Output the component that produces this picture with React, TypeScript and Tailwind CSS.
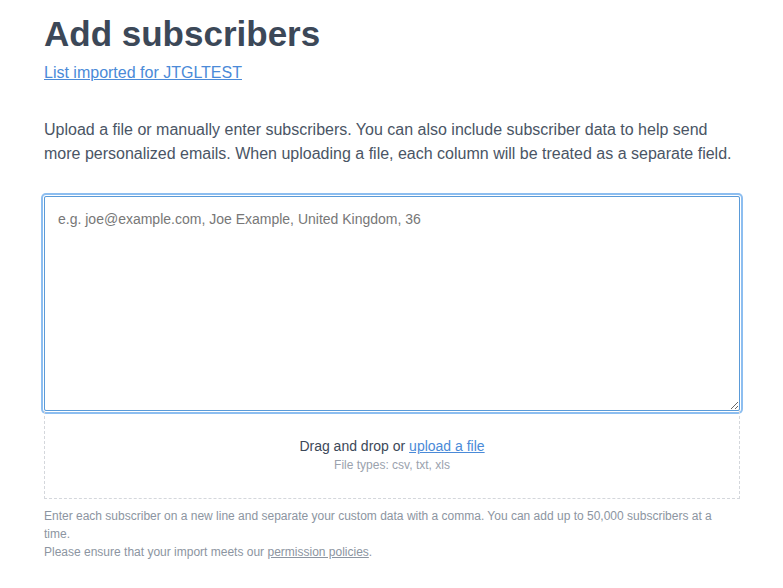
import React from "react";

export default function App() {
  return (
    <div className="min-h-[588px] bg-white" style={{ fontFamily: '"Liberation Sans", Arial, sans-serif' }}>
      <div className="w-[696px] ml-[44px] pt-[14px]">
        <h1 className="text-[35px] leading-[40px] font-bold text-[#3c4858]">Add subscribers</h1>
        <a href="#" className="block mt-[9px] text-[16px] leading-[20px] text-[#4a8ad8] underline">
          List imported for JTGLTEST
        </a>
        <p className="mt-[35px] text-[16px] leading-[24px] text-[#4a5565]">
          Upload a file or manually enter subscribers. You can also include subscriber data to help send more personalized emails. When uploading a file, each column will be treated as a separate field.
        </p>
        <div className="mt-[30px]">
          <textarea
            autoFocus
            placeholder="e.g. joe@example.com, Joe Example, United Kingdom, 36"
            className="block w-full h-[215px] border border-[#5b9bd8] rounded-[2px] px-[13px] pt-[12px] text-[14px] leading-[20px] text-[#333] placeholder:text-[#777] outline-none focus:outline-none ring-2 ring-[#8dbef0] ring-offset-1 ring-offset-white"
            style={{ fontFamily: '"Liberation Sans", Arial, sans-serif' }}
          />
          <div className="h-[88px] border border-dashed border-t-0 border-[#d4d7dc] flex flex-col items-center pt-[25px]">
            <div className="text-[14px] leading-[20px] text-[#3c4858]">
              Drag and drop or <a href="#" className="text-[#4a8ad8] underline">upload a file</a>
            </div>
            <div className="text-[12px] leading-[16px] text-[#9aa2ad] mt-[1px]">File types: csv, txt, xls</div>
          </div>
        </div>
        <div className="mt-[8px] text-[12px] leading-[18px] text-[#8c95a1]">
          <p>Enter each subscriber on a new line and separate your custom data with a comma. You can add up to 50,000 subscribers at a time.</p>
          <p>
            Please ensure that your import meets our <a href="#" className="underline">permission policies</a>.
          </p>
        </div>
      </div>
    </div>
  );
}
